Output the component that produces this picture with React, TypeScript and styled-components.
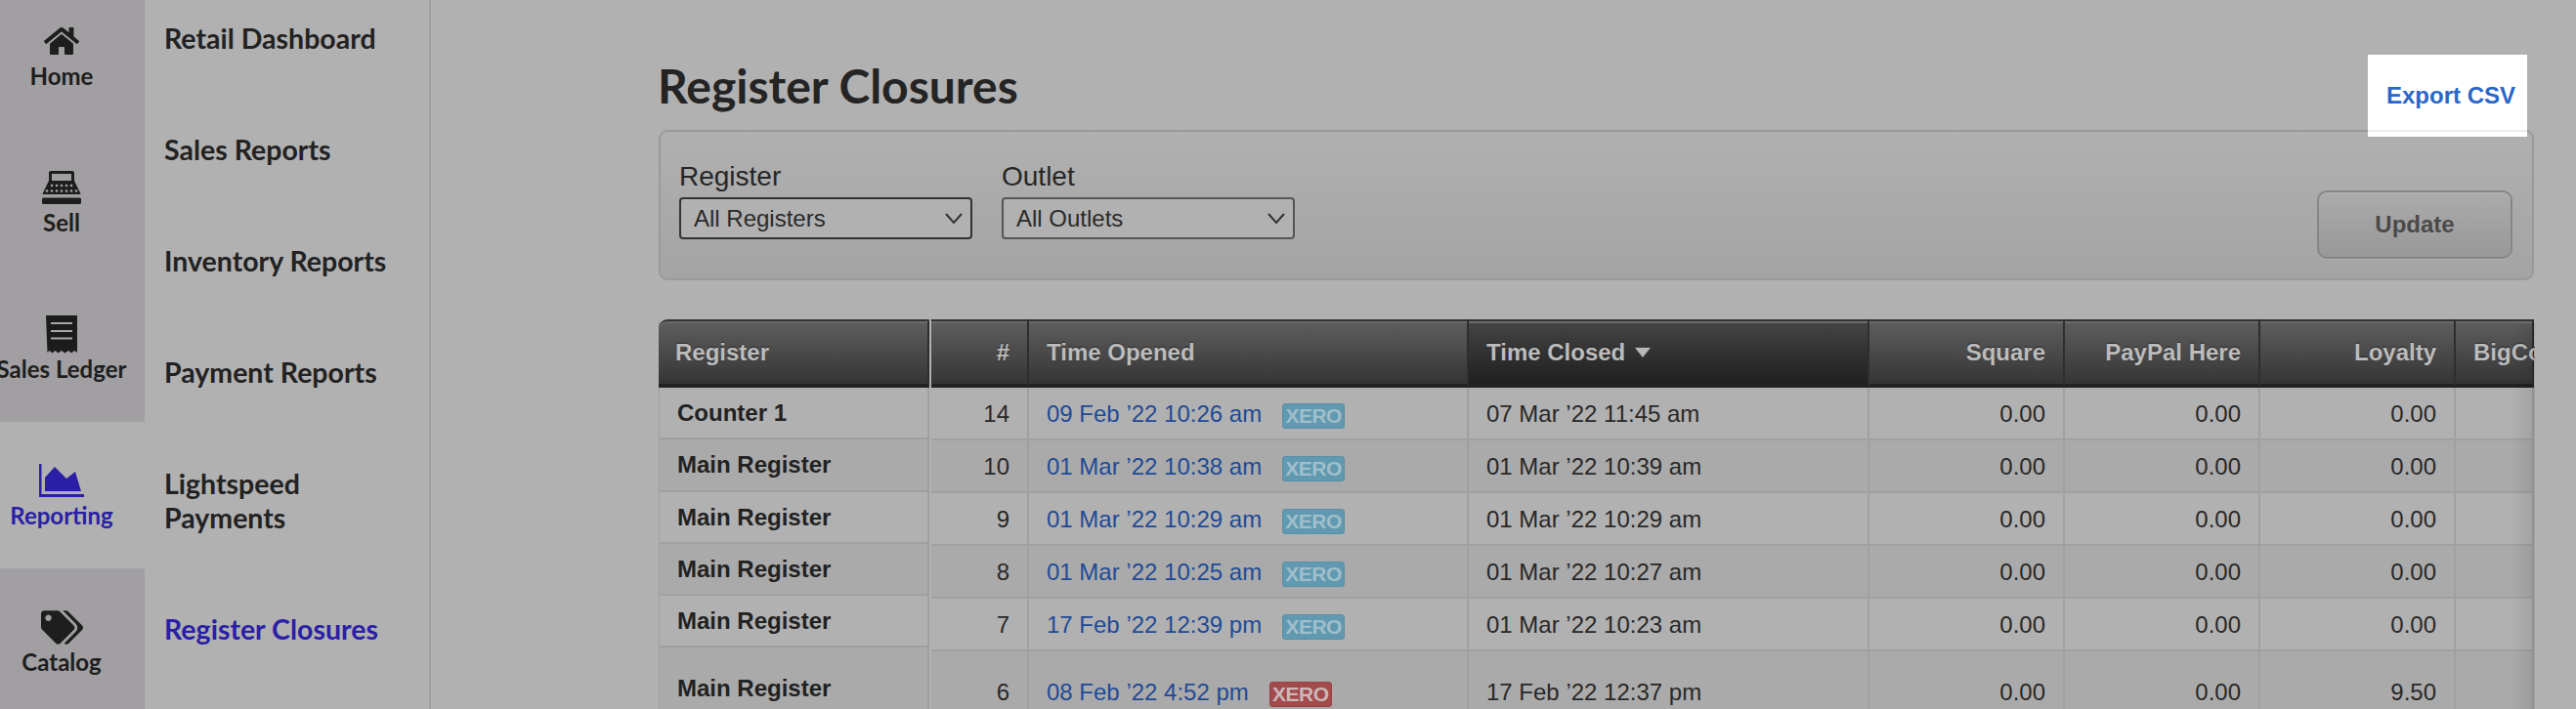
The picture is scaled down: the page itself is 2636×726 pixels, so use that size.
import React from 'react';
import styled, { createGlobalStyle } from 'styled-components';
import { FaHome, FaTags } from 'react-icons/fa';

const Global = createGlobalStyle`
  html, body { margin: 0; padding: 0; background: #b1b1b1; overflow: hidden; }
  * { box-sizing: border-box; }
`;

const Page = styled.div`
  display: flex;
  width: 2636px;
  height: 726px;
  overflow: hidden;
  background: #b1b1b1;
  font-family: "Liberation Sans", Arial, sans-serif;
  color: #242424;
`;

const Rail = styled.nav`
  flex: none;
  width: 148px;
  height: 726px;
  background: #a19fa2;
  overflow: hidden;
`;

const RailList = styled.div`
  margin-top: -18px;
  display: flex;
  flex-direction: column;
`;

const RailItem = styled.div<{ $active?: boolean }>`
  flex: none;
  height: 150px;
  padding: 40px 22px 0 0;
  display: flex;
  flex-direction: column;
  align-items: center;
  background: ${(p) => (p.$active ? '#b1b1b1' : 'transparent')};
  color: ${(p) => (p.$active ? '#2a1fa6' : '#1e1e1e')};
`;

const RailIcon = styled.div`
  height: 40px;
  display: flex;
  align-items: center;
  justify-content: center;
`;

const RailLabel = styled.div`
  margin-top: 2px;
  width: max-content;
  white-space: nowrap;
  font: 700 24px/28px Lato, sans-serif;
`;

const SubNav = styled.nav`
  flex: none;
  width: 293px;
  height: 726px;
  padding: 22px 0 0 20px;
  border-right: 2px solid #a0a0a0;
`;

const SubLink = styled.div<{ $active?: boolean }>`
  width: 230px;
  margin-bottom: 79.5px;
  font: 700 28.5px/34.5px Lato, sans-serif;
  color: ${(p) => (p.$active ? '#2a1fa6' : '#222')};
`;

const Main = styled.main`
  flex: 1;
  position: relative;
  padding: 0 43px 0 233px;
  min-width: 0;
`;

const Title = styled.h1`
  margin: 0 0 0 -1px;
  height: 133px;
  padding-top: 60px;
  font: 700 48px/56px Lato, sans-serif;
  color: #242424;
`;

const ExportBox = styled.a`
  position: absolute;
  top: 56px;
  left: 1982px;
  width: 163px;
  height: 84px;
  padding-left: 19px;
  display: flex;
  align-items: center;
  background: #fff;
  color: #2a66c8;
  font: 700 24px/28px "Liberation Sans", Arial, sans-serif;
  &::after {
    content: '';
    position: absolute;
    left: 0;
    right: 0;
    top: 77px;
    height: 2px;
    background: #ebebeb;
  }
`;

const Panel = styled.section`
  height: 154px;
  padding: 29px 20px 0 19px;
  display: flex;
  align-items: flex-start;
  gap: 30px;
  border: 2px solid #9a9a9a;
  border-radius: 9px;
  background: linear-gradient(#b0b0b0, #a4a4a6);
`;

const Field = styled.div`
  display: flex;
  flex-direction: column;
`;

const FieldLabel = styled.label`
  height: 38px;
  font-size: 28px;
  line-height: 33px;
  color: #262626;
`;

const Select = styled.div<{ $dark?: boolean }>`
  position: relative;
  width: 300px;
  height: 43px;
  padding-left: 13px;
  display: flex;
  align-items: center;
  font-size: 24px;
  color: #2a2a2a;
  background: #b1b1b1;
  border: 2px solid ${(p) => (p.$dark ? '#333' : '#555')};
  border-radius: 4px;
  svg {
    position: absolute;
    right: 8px;
    top: 12px;
  }
`;

const UpdateButton = styled.button`
  margin: 31px 0 0 auto;
  width: 200px;
  height: 70px;
  border: 2px solid #868686;
  border-radius: 10px;
  background: linear-gradient(#ababab, #989898);
  box-shadow: inset 0 1px 0 #b5b5b5, 0 1px 0 #b3b3b3;
  color: #4a4a4a;
  font: 700 24px "Liberation Sans", Arial, sans-serif;
`;

const TableArea = styled.div`
  position: relative;
  margin-top: 40px;
  display: flex;
  gap: 3px;
  width: 1920px;
  overflow: hidden;
  &::after {
    content: '';
    position: absolute;
    top: 4px;
    right: 0;
    bottom: 0;
    width: 24px;
    background: linear-gradient(to right, rgba(0, 0, 0, 0), rgba(0, 0, 0, 0.09));
  }
`;

const FixedColumn = styled.div`
  flex: none;
  width: 277px;
  display: flex;
  flex-direction: column;
  border-left: 1px solid #a0a0a0;
  border-right: 2px solid #a0a0a0;
  margin-right: -1px;
`;

const HeadCell = styled.div<{ $right?: boolean; $sorted?: boolean; $corner?: boolean }>`
  height: 70px;
  padding: 0 18px;
  display: flex;
  align-items: center;
  justify-content: ${(p) => (p.$right ? 'flex-end' : 'flex-start')};
  gap: 10px;
  white-space: nowrap;
  font-weight: 700;
  font-size: 24px;
  color: #bcbcbc;
  text-shadow: 0 -1px 0 #222;
  border-top: 2px solid #333;
  border-bottom: 4px solid #222;
  border-right: 2px solid #2e2e2e;
  border-top-left-radius: ${(p) => (p.$corner ? '9px' : '0')};
  box-shadow: inset 0 2px 0 #6a6a6a;
  background: ${(p) =>
    p.$sorted ? 'linear-gradient(#454545, #1f1f1f)' : 'linear-gradient(#5e5e5e, #353535)'};
`;

const FixedHead = styled(HeadCell)`
  margin: 0 -2px 0 -1px;
  padding-left: 17px;
`;

const FixedCell = styled.div<{ $alt?: boolean; $tall?: boolean }>`
  height: ${(p) => (p.$tall ? '120px' : '53.25px')};
  padding: ${(p) => (p.$tall ? '28px' : '1px')} 0 0 18px;
  display: flex;
  align-items: ${(p) => (p.$tall ? 'flex-start' : 'center')};
  font-weight: 700;
  font-size: 24px;
  color: #222;
  background: ${(p) => (p.$alt ? '#aaaaaa' : '#b1b1b1')};
  border-bottom: 2px solid #a0a0a0;
`;

const ScrollGrid = styled.div`
  flex: none;
  width: 1640px;
  display: grid;
  grid-template-columns: 100px 450px 410px 200px 200px 200px 80px;
  grid-auto-rows: min-content;
`;

const Cell = styled.div<{ $alt?: boolean; $tall?: boolean; $right?: boolean }>`
  height: ${(p) => (p.$tall ? '120px' : '54px')};
  padding: ${(p) => (p.$tall ? '28px' : '2px')} 18px 0;
  display: flex;
  align-items: ${(p) => (p.$tall ? 'flex-start' : 'center')};
  justify-content: ${(p) => (p.$right ? 'flex-end' : 'flex-start')};
  font-size: 24px;
  line-height: 28px;
  white-space: nowrap;
  color: #282828;
  background: ${(p) => (p.$alt ? '#aaaaaa' : '#b1b1b1')};
  border-bottom: 2px solid #a0a0a0;
  border-right: 2px solid #a0a0a0;
`;

const DateLink = styled.a`
  color: #1f4a96;
`;

const Badge = styled.span<{ $error?: boolean }>`
  margin: 3px 0 0 21px;
  width: 64px;
  height: 26px;
  display: inline-flex;
  align-items: center;
  justify-content: center;
  border-radius: 3px;
  font-weight: 700;
  font-size: 21px;
  letter-spacing: -0.5px;
  background: ${(p) => (p.$error ? '#a24a4c' : '#6199b0')};
  border: 1px solid ${(p) => (p.$error ? '#9c4244' : '#5790a8')};
  color: ${(p) => (p.$error ? '#ccb8b8' : '#a0bfcb')};
`;

const SortArrow = styled.span`
  width: 0;
  height: 0;
  border-left: 8px solid transparent;
  border-right: 8px solid transparent;
  border-top: 10px solid #b8b8b8;
`;

const Chevron = () => (
  <svg width="18" height="16" viewBox="0 0 18 16" fill="none" stroke="#333" strokeWidth="2">
    <path d="M1 3l8 9 8-9" />
  </svg>
);

const RegisterIcon = () => (
  <svg width="40" height="34" viewBox="0 0 40 34">
    <path
      fill="#1e1e1e"
      fillRule="evenodd"
      d="M8.5 0H31a2 2 0 0 1 2 2v8h-3V3H10v7H7V2a2 2 0 0 1 1.500-2z"
    />
    <path fill="#1e1e1e" d="M7 10h26l6 12.500a2 2 0 0 1 .4 1.500H0.600a2 2 0 0 1 .4-1.500z" />
    <rect x="0" y="27.500" width="40" height="6.500" rx="1.500" fill="#1e1e1e" />
    <g fill="#a5a3a6">
      {[11, 16, 21, 26, 31].map((x) => (
        <circle key={x} cx={x - 1} cy="15" r="1.300" />
      ))}
      {[6, 11, 16, 21, 26, 31, 36].map((x) => (
        <circle key={x} cx={x - 1} cy="20.500" r="1.300" />
      ))}
    </g>
  </svg>
);

const ReceiptIcon = () => (
  <svg width="32" height="39" viewBox="0 0 32 39">
    <path
      fill="#1c1c1c"
      d="M0 0h32v38l-3-2-3 2.500-3-2.500-3.500 2.500-3.500-2.500-3.500 2.500-3-2.500-3 2.500-3-2.500-2 2z"
    />
    <path stroke="#a8a7a9" strokeWidth="2" d="M5 8h22M5 16h22M5 23.500h22" />
  </svg>
);

const AreaIcon = () => (
  <svg width="46" height="34" viewBox="0 0 46 34" fill="#2a1fa6">
    <path d="M0 0h2.500v31H46v3H0z" />
    <path d="M6 14L16 3l12 12 9-7 6 20H6z" />
  </svg>
);

const rail = [
  { label: 'Home', icon: <FaHome size={36} /> },
  { label: 'Sell', icon: <RegisterIcon /> },
  { label: 'Sales Ledger', icon: <ReceiptIcon /> },
  { label: 'Reporting', icon: <AreaIcon />, active: true },
  { label: 'Catalog', icon: <FaTags size={43} /> },
];

const links = [
  'Retail Dashboard',
  'Sales Reports',
  'Inventory Reports',
  'Payment Reports',
  'Lightspeed Payments',
];

const rows = [
  { reg: 'Counter 1', n: '14', open: "09 Feb ’22 10:26 am", close: "07 Mar ’22 11:45 am", loyalty: '0.00' },
  { reg: 'Main Register', n: '10', open: "01 Mar ’22 10:38 am", close: "01 Mar ’22 10:39 am", loyalty: '0.00' },
  { reg: 'Main Register', n: '9', open: "01 Mar ’22 10:29 am", close: "01 Mar ’22 10:29 am", loyalty: '0.00' },
  { reg: 'Main Register', n: '8', open: "01 Mar ’22 10:25 am", close: "01 Mar ’22 10:27 am", loyalty: '0.00' },
  { reg: 'Main Register', n: '7', open: "17 Feb ’22 12:39 pm", close: "01 Mar ’22 10:23 am", loyalty: '0.00' },
  { reg: 'Main Register', n: '6', open: "08 Feb ’22 4:52 pm", close: "17 Feb ’22 12:37 pm", loyalty: '9.50', error: true, tall: true },
];

export default function App() {
  return (
    <Page>
      <Global />
      <Rail>
        <RailList>
          {rail.map((r) => (
            <RailItem key={r.label} $active={r.active}>
              <RailIcon>{r.icon}</RailIcon>
              <RailLabel>{r.label}</RailLabel>
            </RailItem>
          ))}
        </RailList>
      </Rail>
      <SubNav>
        {links.map((l) => (
          <SubLink key={l}>{l}</SubLink>
        ))}
        <SubLink $active>Register Closures</SubLink>
      </SubNav>
      <Main>
        <Title>Register Closures</Title>
        <ExportBox>Export CSV</ExportBox>
        <Panel>
          <Field>
            <FieldLabel>Register</FieldLabel>
            <Select $dark>
              All Registers
              <Chevron />
            </Select>
          </Field>
          <Field>
            <FieldLabel>Outlet</FieldLabel>
            <Select>
              All Outlets
              <Chevron />
            </Select>
          </Field>
          <UpdateButton>Update</UpdateButton>
        </Panel>
        <TableArea>
          <FixedColumn>
            <FixedHead $corner>Register</FixedHead>
            {rows.map((r, i) => (
              <FixedCell key={i} $alt={i % 2 === 1} $tall={r.tall}>
                {r.reg}
              </FixedCell>
            ))}
          </FixedColumn>
          <ScrollGrid>
            <HeadCell $right>#</HeadCell>
            <HeadCell>Time Opened</HeadCell>
            <HeadCell $sorted>
              Time Closed
              <SortArrow />
            </HeadCell>
            <HeadCell $right>Square</HeadCell>
            <HeadCell $right>PayPal Here</HeadCell>
            <HeadCell $right>Loyalty</HeadCell>
            <HeadCell>BigCommerce</HeadCell>
            {rows.map((r, i) => {
              const alt = i % 2 === 1;
              return (
                <React.Fragment key={i}>
                  <Cell $alt={alt} $tall={r.tall} $right>{r.n}</Cell>
                  <Cell $alt={alt} $tall={r.tall}>
                    <DateLink>{r.open}</DateLink>
                    <Badge $error={r.error}>XERO</Badge>
                  </Cell>
                  <Cell $alt={alt} $tall={r.tall}>{r.close}</Cell>
                  <Cell $alt={alt} $tall={r.tall} $right>0.00</Cell>
                  <Cell $alt={alt} $tall={r.tall} $right>0.00</Cell>
                  <Cell $alt={alt} $tall={r.tall} $right>{r.loyalty}</Cell>
                  <Cell $alt={alt} $tall={r.tall} />
                </React.Fragment>
              );
            })}
          </ScrollGrid>
        </TableArea>
      </Main>
    </Page>
  );
}
